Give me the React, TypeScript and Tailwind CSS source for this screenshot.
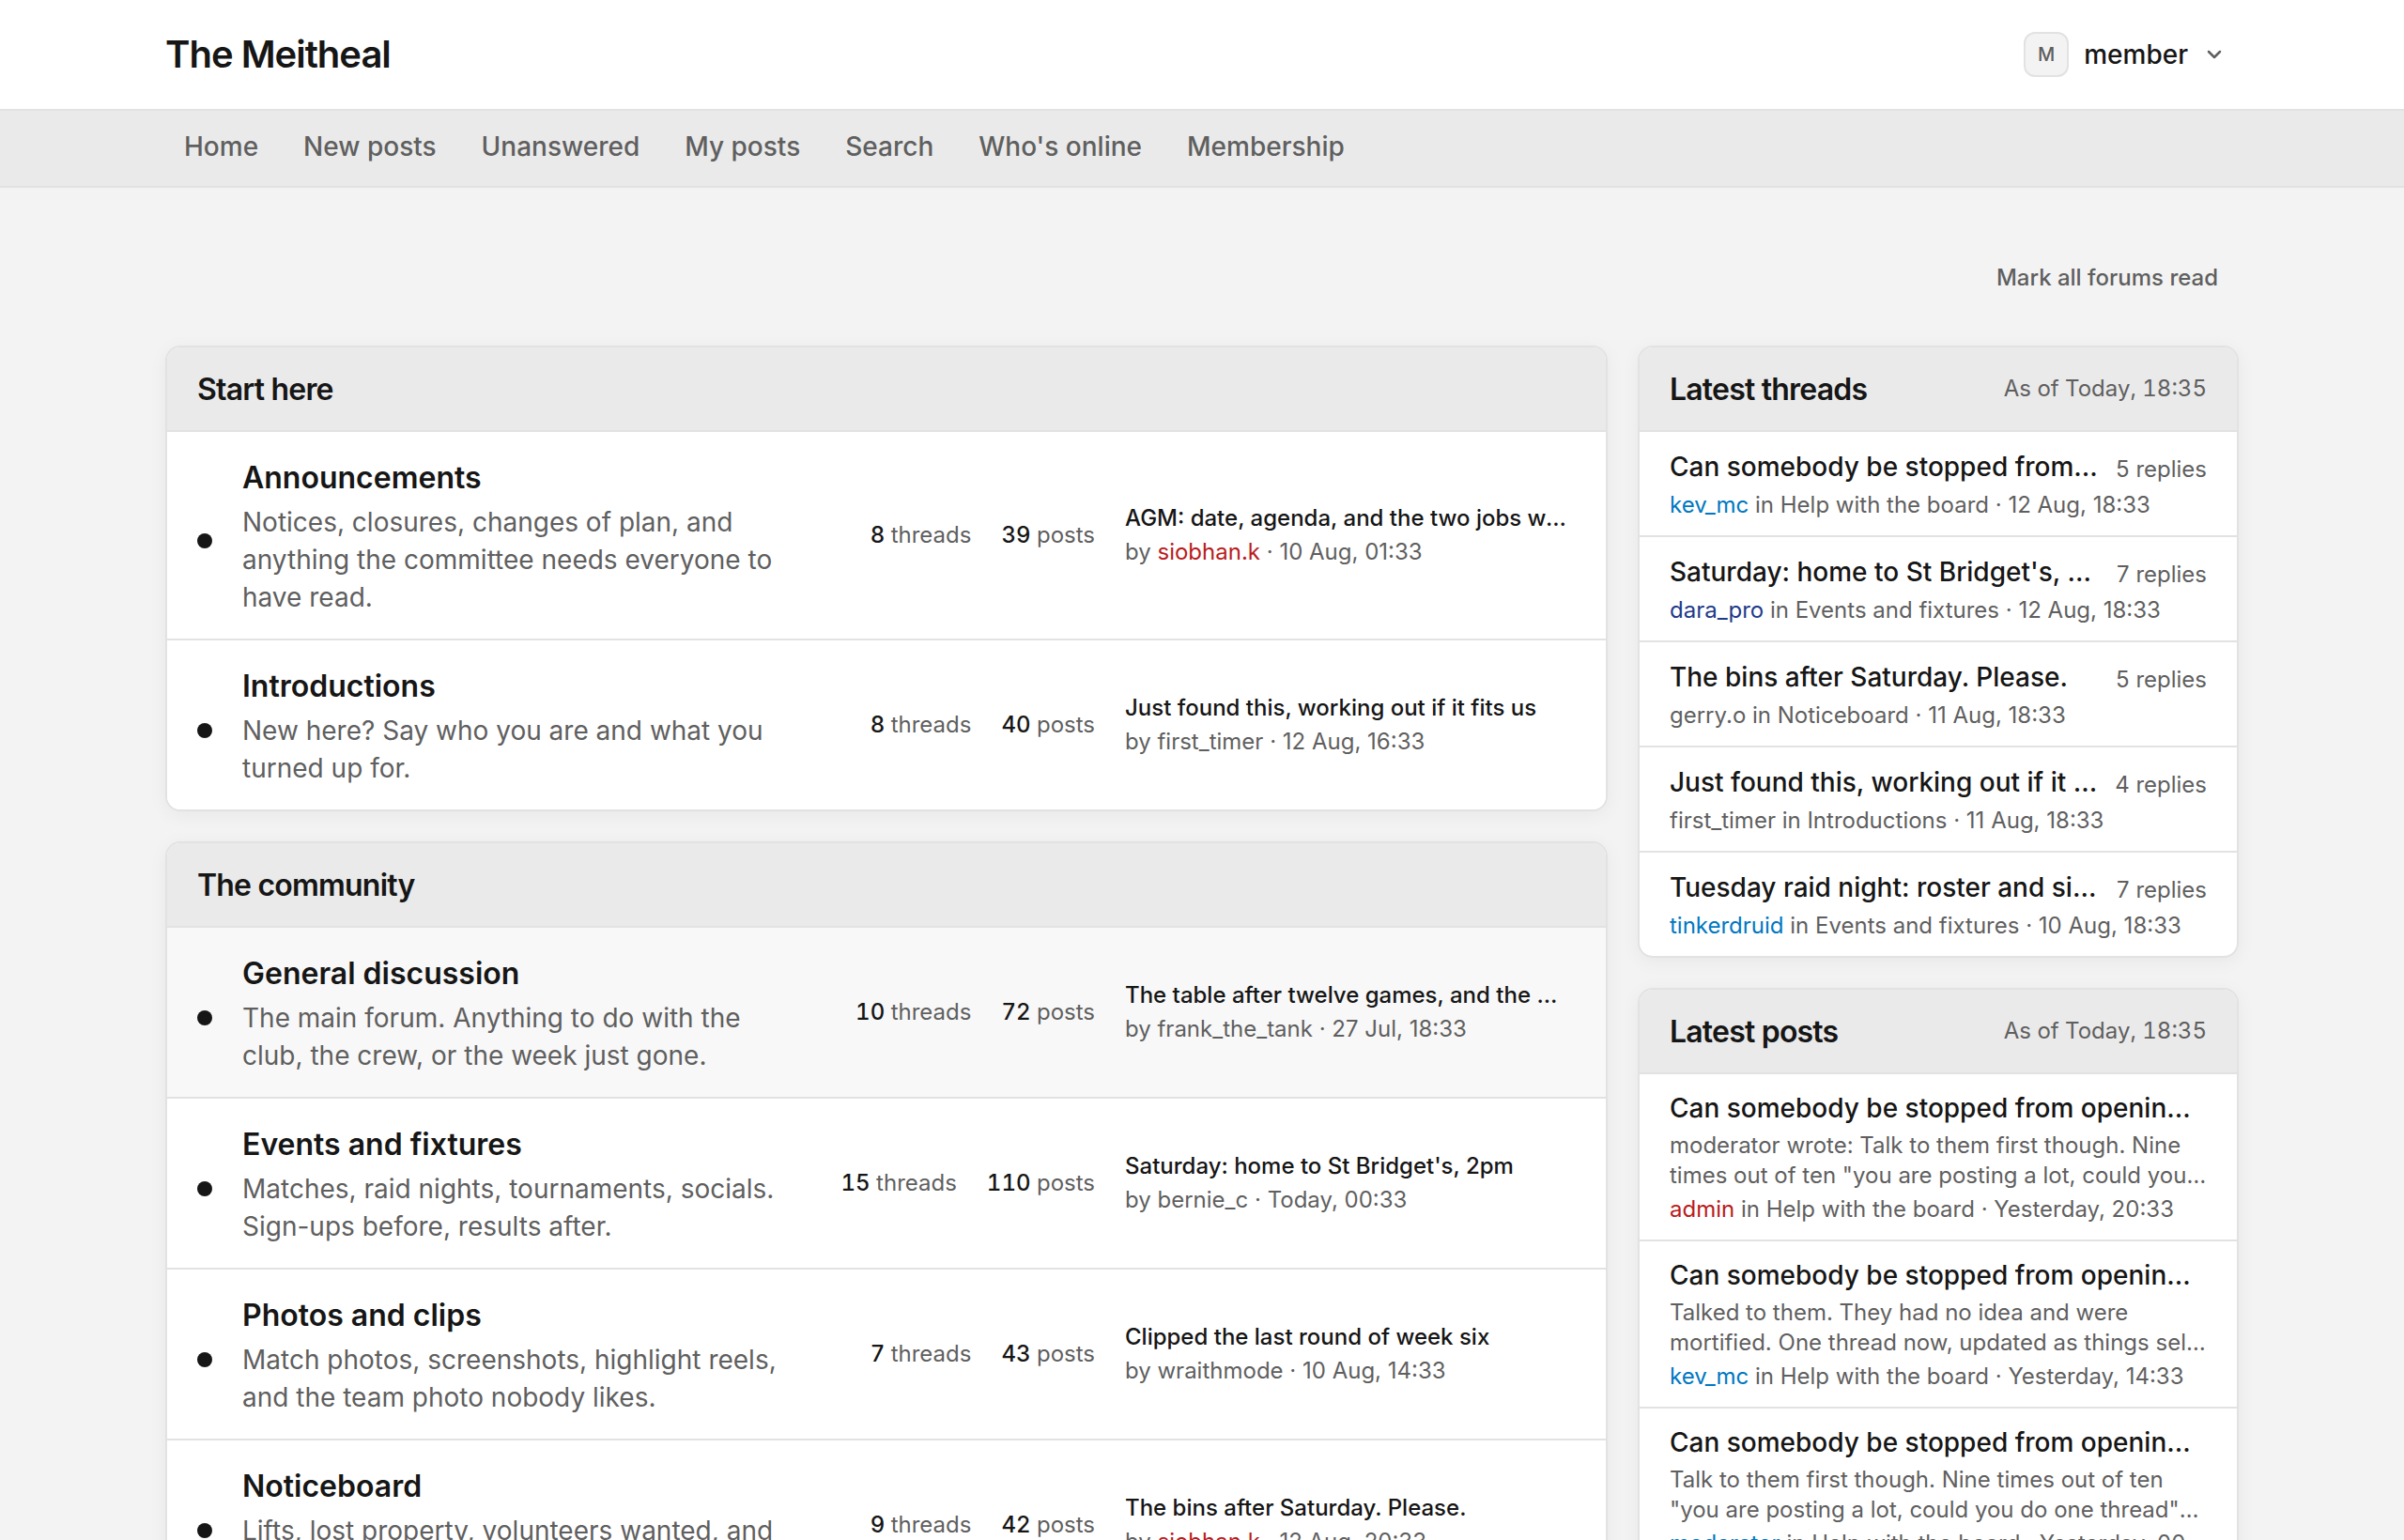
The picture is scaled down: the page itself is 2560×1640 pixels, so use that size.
import { ChevronDown } from "lucide-react";

type Forum = {
  title: string;
  desc: string;
  threads: number;
  posts: number;
  lastTitle: string;
  lastBy: string;
  lastByClass?: string;
  lastAt: string;
  tinted?: boolean;
};

const startHere: Forum[] = [
  {
    title: "Announcements",
    desc: "Notices, closures, changes of plan, and anything the committee needs everyone to have read.",
    threads: 8,
    posts: 39,
    lastTitle: "AGM: date, agenda, and the two jobs we still need filled",
    lastBy: "siobhan.k",
    lastByClass: "text-[#b91c1c]",
    lastAt: "10 Aug, 01:33",
  },
  {
    title: "Introductions",
    desc: "New here? Say who you are and what you turned up for.",
    threads: 8,
    posts: 40,
    lastTitle: "Just found this, working out if it fits us",
    lastBy: "first_timer",
    lastAt: "12 Aug, 16:33",
  },
];

const community: Forum[] = [
  {
    title: "General discussion",
    desc: "The main forum. Anything to do with the club, the crew, or the week just gone.",
    threads: 10,
    posts: 72,
    lastTitle: "The table after twelve games, and the arguments it started",
    lastBy: "frank_the_tank",
    lastAt: "27 Jul, 18:33",
    tinted: true,
  },
  {
    title: "Events and fixtures",
    desc: "Matches, raid nights, tournaments, socials. Sign-ups before, results after.",
    threads: 15,
    posts: 110,
    lastTitle: "Saturday: home to St Bridget's, 2pm",
    lastBy: "bernie_c",
    lastAt: "Today, 00:33",
  },
  {
    title: "Photos and clips",
    desc: "Match photos, screenshots, highlight reels, and the team photo nobody likes.",
    threads: 7,
    posts: 43,
    lastTitle: "Clipped the last round of week six",
    lastBy: "wraithmode",
    lastAt: "10 Aug, 14:33",
  },
  {
    title: "Noticeboard",
    desc: "Lifts, lost property, volunteers wanted, and anything else worth pinning up.",
    threads: 9,
    posts: 42,
    lastTitle: "The bins after Saturday. Please.",
    lastBy: "siobhan.k",
    lastByClass: "text-[#b91c1c]",
    lastAt: "12 Aug, 20:33",
  },
];

const latestThreads = [
  { title: "Can somebody be stopped from opening new threads", replies: 5, user: "kev_mc", userClass: "text-[#0077c2]", where: "Help with the board", at: "12 Aug, 18:33" },
  { title: "Saturday: home to St Bridget's, 2pm", replies: 7, user: "dara_pro", userClass: "text-[#1e3a8a]", where: "Events and fixtures", at: "12 Aug, 18:33" },
  { title: "The bins after Saturday. Please.", replies: 5, user: "gerry.o", userClass: "", where: "Noticeboard", at: "11 Aug, 18:33" },
  { title: "Just found this, working out if it fits us", replies: 4, user: "first_timer", userClass: "", where: "Introductions", at: "11 Aug, 18:33" },
  { title: "Tuesday raid night: roster and sign-ups", replies: 7, user: "tinkerdruid", userClass: "text-[#0077c2]", where: "Events and fixtures", at: "10 Aug, 18:33" },
];

const latestPosts = [
  {
    preview: 'moderator wrote: Talk to them first though. Nine times out of ten "you are posting a lot, could you do one thread" works fine.',
    user: "admin",
    userClass: "text-[#b91c1c]",
    at: "Yesterday, 20:33",
  },
  {
    preview: "Talked to them. They had no idea and were mortified. One thread now, updated as things sell, and no hard feelings.",
    user: "kev_mc",
    userClass: "text-[#0077c2]",
    at: "Yesterday, 14:33",
  },
  {
    preview: 'Talk to them first though. Nine times out of ten "you are posting a lot, could you do one thread" works fine.',
    user: "moderator",
    userClass: "text-[#0077c2]",
    at: "Yesterday, 00:33",
  },
];

const navItems = ["Home", "New posts", "Unanswered", "My posts", "Search", "Who's online", "Membership"];

const ForumRow = ({ forum }: { forum: Forum }) => (
  <div
    className={`flex items-center border-b-2 border-[#e2e2e2] py-6 pr-10 pl-8 last:border-b-0 ${
      forum.tinted ? "bg-[#f8f8f8]" : "bg-white"
    }`}
  >
    <div className="mt-[11px] h-4 w-4 shrink-0 rounded-full bg-[#161616]" />
    <div className="ml-8 w-[590px] shrink-0">
      <h3 className="text-[32px] leading-[50px] font-semibold text-[#161616]">{forum.title}</h3>
      <p className="mt-0.5 text-[28px] leading-[40px] text-[#5f5f5f]">{forum.desc}</p>
    </div>
    <div className="flex flex-1 justify-end gap-8 text-[24px] whitespace-nowrap text-[#5f5f5f] tabular-nums">
      <span>
        <span className="font-medium text-[#161616]">{forum.threads}</span> threads
      </span>
      <span>
        <span className="font-medium text-[#161616]">{forum.posts}</span> posts
      </span>
    </div>
    <div className="ml-8 w-[472px] shrink-0">
      <div className="truncate text-[24px] leading-[36px] font-medium text-[#161616]">{forum.lastTitle}</div>
      <div className="truncate text-[24px] leading-[36px] text-[#5f5f5f]">
        by <span className={forum.lastByClass}>{forum.lastBy}</span> · {forum.lastAt}
      </div>
    </div>
  </div>
);

const CardHeader = ({ title, note }: { title: string; note?: string }) => (
  <div className="flex h-[90px] items-center justify-between border-b-2 border-[#e2e2e2] bg-[#eaeaea] px-8">
    <h2 className="pt-0.5 text-[32px] font-semibold tracking-tight text-[#161616]">{title}</h2>
    {note && <span className="text-[24px] text-[#5f5f5f] tabular-nums">{note}</span>}
  </div>
);

const Card = ({ children }: { children: React.ReactNode }) => (
  <section className="overflow-hidden rounded-2xl border-2 border-[#e2e2e2] bg-white shadow-[0_4px_20px_rgba(0,0,0,0.05)]">
    {children}
  </section>
);

export default function App() {
  return (
    <div className="h-screen overflow-hidden bg-[#f3f3f3] font-['Inter',sans-serif] text-[#161616]">
      <header className="flex h-[116px] items-center justify-between bg-white px-[176px]">
        <div className="text-[40px] font-semibold tracking-tight">The Meitheal</div>
        <div className="flex items-center pr-[14px]">
          <div className="flex h-12 w-12 items-center justify-center rounded-xl border-2 border-[#e2e2e2] bg-[#f3f3f3] text-[20px] font-medium text-[#5f5f5f]">
            M
          </div>
          <span className="ml-4 text-[28px] font-medium">member</span>
          <ChevronDown className="ml-4 h-6 w-6 text-[#5f5f5f]" strokeWidth={2.5} />
        </div>
      </header>
      <nav className="flex h-[84px] items-center gap-2 border-y-2 border-[#e2e2e2] bg-[#eaeaea] px-[176px] pb-1">
        {navItems.map((item) => (
          <a key={item} className="px-5 text-[28px] font-medium text-[#5f5f5f]">
            {item}
          </a>
        ))}
      </nav>
      <div className="flex h-[168px] items-start justify-end px-[198px] pt-[78px]">
        <span className="text-[24px] leading-[36px] font-medium text-[#5f5f5f]">Mark all forums read</span>
      </div>
      <main className="flex items-start gap-8 px-[176px]">
        <div className="flex w-[1536px] flex-col gap-8">
          <Card>
            <CardHeader title="Start here" />
            {startHere.map((f) => (
              <ForumRow key={f.title} forum={f} />
            ))}
          </Card>
          <Card>
            <CardHeader title="The community" />
            {community.map((f) => (
              <ForumRow key={f.title} forum={f} />
            ))}
          </Card>
        </div>
        <aside className="flex w-[640px] flex-col gap-8">
          <Card>
            <CardHeader title="Latest threads" note="As of Today, 18:35" />
            {latestThreads.map((t) => (
              <div key={t.title} className="border-b-2 border-[#e2e2e2] px-8 py-4 last:border-b-0">
                <div className="flex items-center gap-4">
                  <div className="min-w-0 flex-1 truncate text-[28px] leading-[40px] font-medium">{t.title}</div>
                  <div className="mt-[6px] shrink-0 text-[24px] text-[#5f5f5f]">{t.replies} replies</div>
                </div>
                <div className="mt-1 truncate text-[24px] leading-[32px] text-[#5f5f5f]">
                  <span className={t.userClass}>{t.user}</span> in {t.where} · {t.at}
                </div>
              </div>
            ))}
          </Card>
          <Card>
            <CardHeader title="Latest posts" note="As of Today, 18:35" />
            {latestPosts.map((p) => (
              <div key={p.user} className="border-b-2 border-[#e2e2e2] px-8 py-4 last:border-b-0">
                <div className="truncate text-[28px] leading-[40px] font-medium">
                  Can somebody be stopped from opening new threads
                </div>
                <p className="mt-1 line-clamp-2 text-[24px] leading-[32px] text-[#5f5f5f]">{p.preview}</p>
                <div className="mt-1 truncate text-[24px] leading-[32px] text-[#5f5f5f]">
                  <span className={p.userClass}>{p.user}</span> in Help with the board · {p.at}
                </div>
              </div>
            ))}
          </Card>
        </aside>
      </main>
    </div>
  );
}
